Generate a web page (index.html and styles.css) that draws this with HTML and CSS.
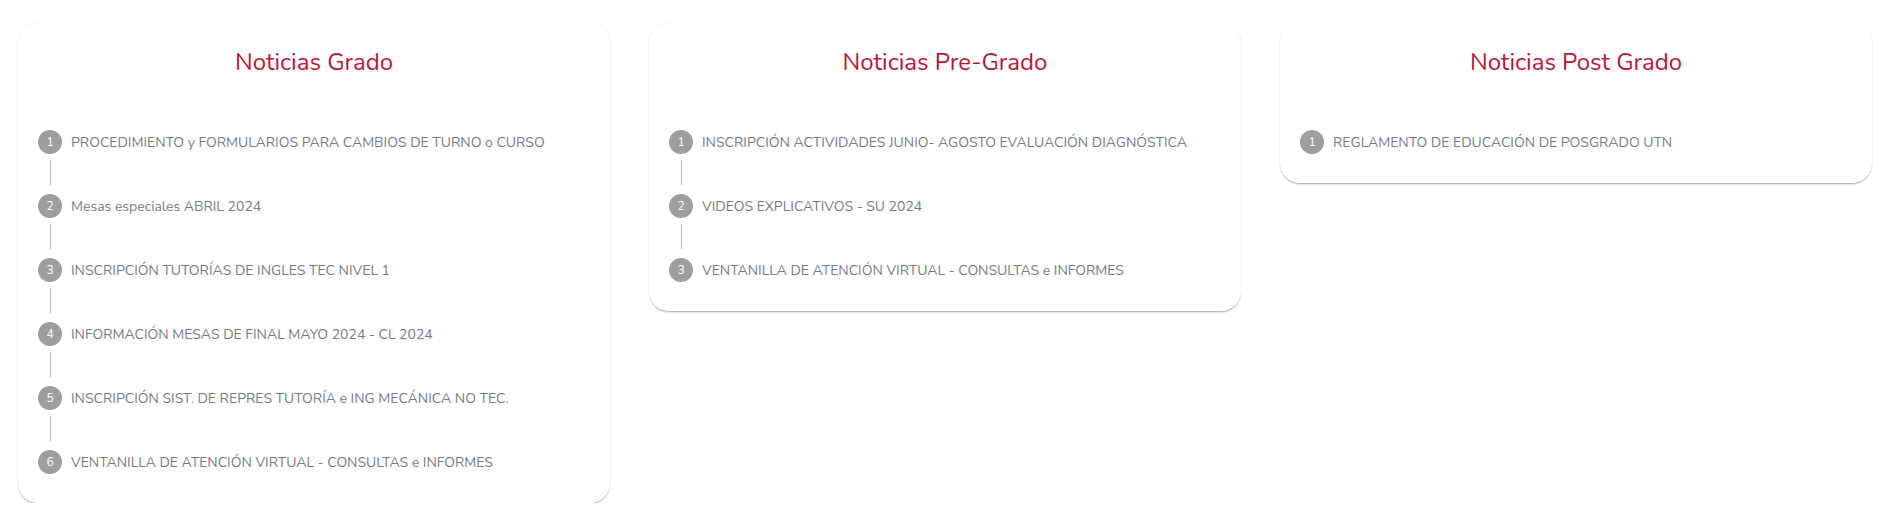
FILE: index.html
```html
<!DOCTYPE html>
<html lang="es">
<head>
<meta charset="utf-8">
<title>Noticias</title>
<link rel="stylesheet" href="styles.css">
</head>
<body>
<div class="board">
  <section class="card">
    <h2 class="card-title">Noticias Grado</h2>
    <ol class="steps">
      <li class="step"><span class="num">1</span><span class="label">PROCEDIMIENTO y FORMULARIOS PARA CAMBIOS DE TURNO o CURSO</span></li>
      <li class="link"></li>
      <li class="step"><span class="num">2</span><span class="label">Mesas especiales ABRIL 2024</span></li>
      <li class="link"></li>
      <li class="step"><span class="num">3</span><span class="label">INSCRIPCIÓN TUTORÍAS DE INGLES TEC NIVEL 1</span></li>
      <li class="link"></li>
      <li class="step"><span class="num">4</span><span class="label">INFORMACIÓN MESAS DE FINAL MAYO 2024 - CL 2024</span></li>
      <li class="link"></li>
      <li class="step"><span class="num">5</span><span class="label">INSCRIPCIÓN SIST. DE REPRES TUTORÍA e ING MECÁNICA NO TEC.</span></li>
      <li class="link"></li>
      <li class="step"><span class="num">6</span><span class="label">VENTANILLA DE ATENCIÓN VIRTUAL - CONSULTAS e INFORMES</span></li>
    </ol>
  </section>
  <section class="card">
    <h2 class="card-title">Noticias Pre-Grado</h2>
    <ol class="steps">
      <li class="step"><span class="num">1</span><span class="label">INSCRIPCIÓN ACTIVIDADES JUNIO- AGOSTO EVALUACIÓN DIAGNÓSTICA</span></li>
      <li class="link"></li>
      <li class="step"><span class="num">2</span><span class="label">VIDEOS EXPLICATIVOS - SU 2024</span></li>
      <li class="link"></li>
      <li class="step"><span class="num">3</span><span class="label">VENTANILLA DE ATENCIÓN VIRTUAL - CONSULTAS e INFORMES</span></li>
    </ol>
  </section>
  <section class="card">
    <h2 class="card-title">Noticias Post Grado</h2>
    <ol class="steps">
      <li class="step"><span class="num">1</span><span class="label">REGLAMENTO DE EDUCACIÓN DE POSGRADO UTN</span></li>
    </ol>
  </section>
</div>
</body>
</html>
```

FILE: styles.css
```css
* { box-sizing: border-box; }

body {
  margin: 0;
  background: #ffffff;
  font-family: "Nunito", Lato, "Noto Sans", sans-serif;
}

.board {
  display: flex;
  align-items: flex-start;
  gap: 39px;
  padding: 23px 10px 0 18px;
}

.card {
  width: 592px;
  flex: 0 0 592px;
  background: #ffffff;
  border-radius: 20px;
  padding: 23px 20px 29px 20px;
  box-shadow: 0 2px 2px -1px rgba(0, 0, 0, 0.28),
              0 1px 2px 0 rgba(0, 0, 0, 0.10),
              0 0 2px 0 rgba(0, 0, 0, 0.06);
}

.card-title {
  margin: 0;
  text-align: center;
  font-weight: 400;
  font-size: 24px;
  line-height: 32px;
  color: #bd1538;
}

.steps {
  list-style: none;
  margin: 52px 0 0 0;
  padding: 0;
}

.step {
  display: flex;
  align-items: center;
  gap: 9px;
  height: 24px;
}

.num {
  flex: 0 0 24px;
  width: 24px;
  height: 24px;
  border-radius: 50%;
  background: #9e9e9e;
  color: #ffffff;
  font-size: 12px;
  line-height: 24px;
  text-align: center;
}

.label {
  font-size: 14px;
  color: #737c84;
  white-space: nowrap;
}

.link {
  width: 1px;
  height: 25px;
  margin: 6px 0 9px 12px;
  background: #bdbdbd;
}
```
